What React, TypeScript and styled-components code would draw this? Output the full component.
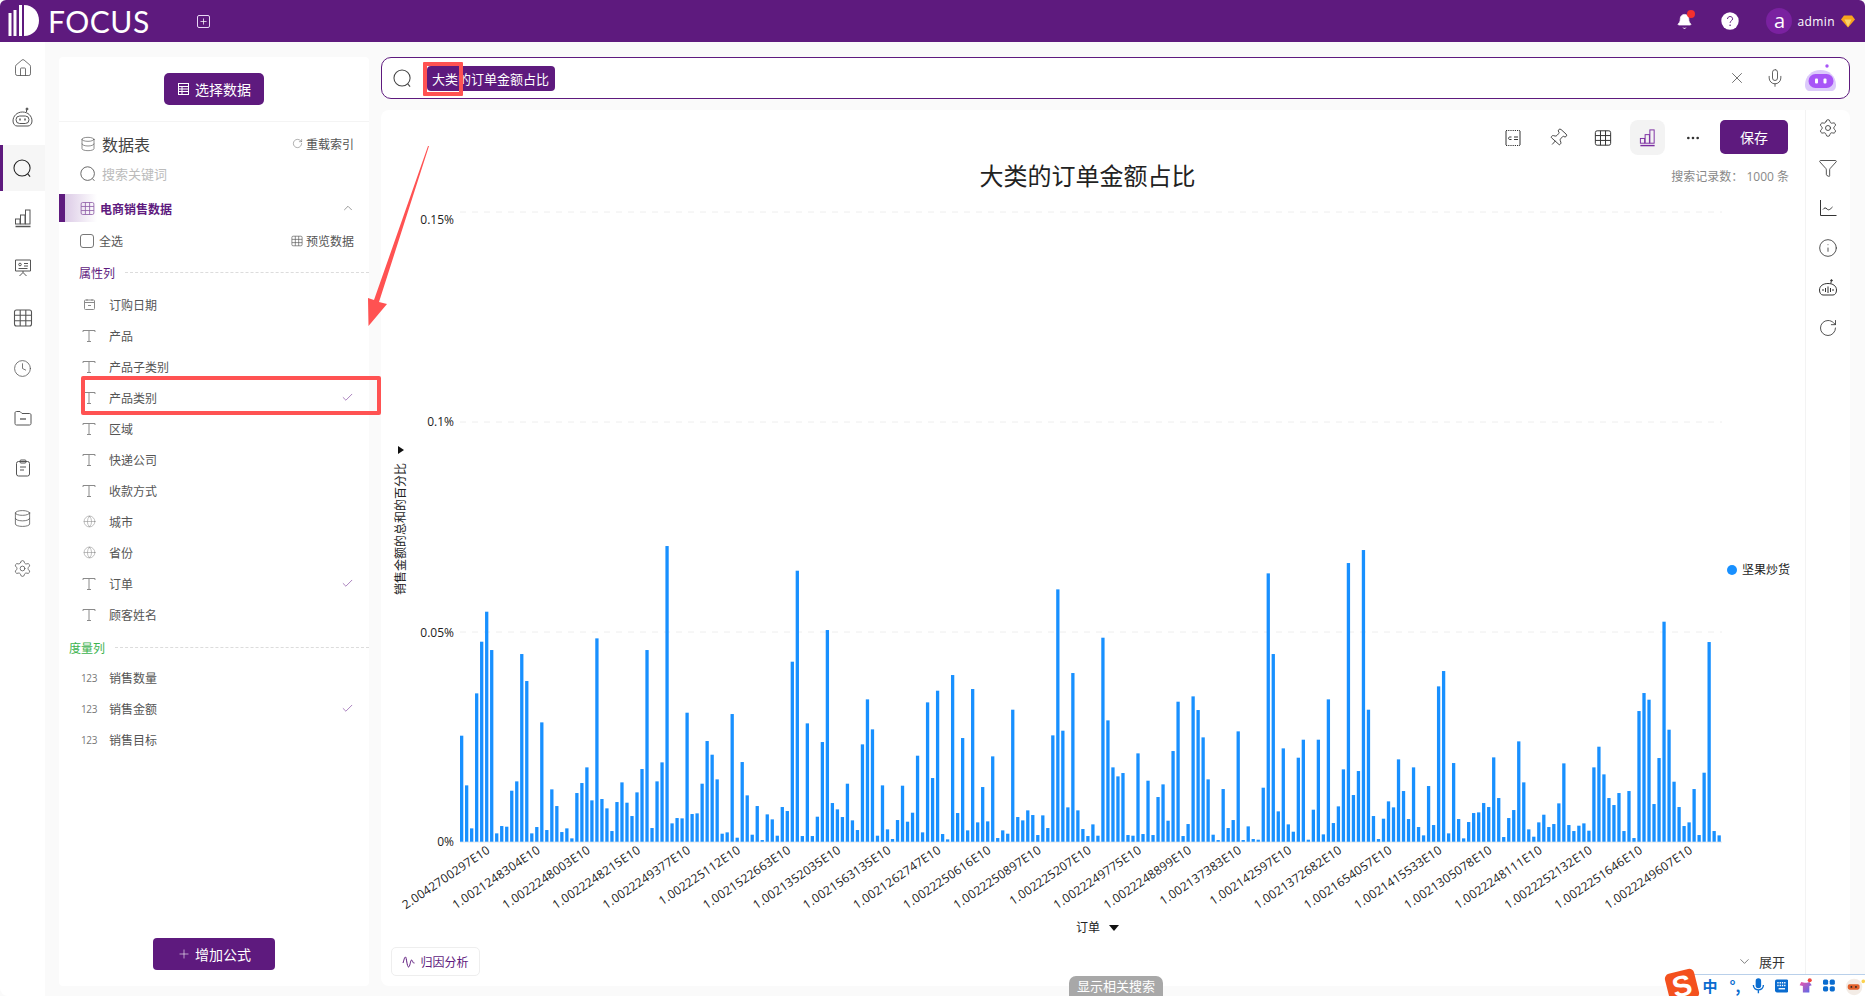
import { ReactNode } from "react";
import styled, { createGlobalStyle } from "styled-components";
import {
  Bell, Check, ChevronDown, ChevronUp, Clock, Database, Ellipsis, Funnel, Globe, House, Info, Mic,
  Pin, Plus, RotateCw, Settings, X,
} from "lucide-react";

const PURPLE = "#5e1a7e";
const RED = "#ff5252";
const CJK = `"Noto Sans CJK SC", "Open Sans", sans-serif`;

const GlobalStyle = createGlobalStyle`
  html, body {
    margin: 0;
    padding: 0;
    height: 100%;
    overflow: hidden;
    background: #fafafa;
    font-family: "Open Sans", "Noto Sans CJK SC", sans-serif;
  }
  #root { height: 100%; }
`;

const Page = styled.div`
  position: relative;
  width: 1865px;
  height: 996px;
  display: flex;
  flex-direction: column;
  overflow: hidden;
`;

/* header */
const TopBar = styled.header`
  height: 42px;
  flex: none;
  background: ${PURPLE};
  border-radius: 6px 6px 0 0;
  display: flex;
  align-items: center;
  color: #fff;
  padding: 0 10px 0 8px;
`;

const LogoText = styled.span`
  margin-left: 8px;
  width: 101px;
  font-family: "Lato", sans-serif;
  font-weight: 400;
  font-size: 30px;
  line-height: 42px;
  letter-spacing: 0.5px;
  color: #fff;
`;

const AddTab = styled.span`
  margin-left: 48px;
  width: 11px;
  height: 11px;
  border: 1px solid #e9d8f5;
  border-radius: 2px;
  display: flex;
  align-items: center;
  justify-content: center;
`;

const TopRight = styled.div`
  margin-left: auto;
  display: flex;
  align-items: center;
`;

const BellWrap = styled.span`
  position: relative;
  display: flex;
  margin-right: 28px;
`;

const BellDot = styled.span`
  position: absolute;
  top: -3px;
  right: -2px;
  width: 8px;
  height: 8px;
  background: #f5302e;
  border-radius: 50%;
`;

const Avatar = styled.span`
  margin-left: 27px;
  width: 26px;
  height: 26px;
  border-radius: 50%;
  background: #7a21a0;
  display: flex;
  align-items: center;
  justify-content: center;
  font-size: 20px;
  line-height: 24px;
`;

const UserName = styled.span`
  margin: 0 6px 0 5px;
  font-size: 12px;
  letter-spacing: 0.4px;
`;

/* body */
const Body = styled.div`
  flex: 1;
  display: flex;
  min-height: 0;
`;

const Nav = styled.nav`
  width: 45px;
  flex: none;
  background: #fff;
  border-bottom-left-radius: 8px;
  display: flex;
  flex-direction: column;
  padding-top: 1px;
`;

const NavItem = styled.div<{ $active?: boolean }>`
  height: ${(p) => (p.$active ? 46 : 50)}px;
  margin: ${(p) => (p.$active ? "2px 0" : "0")};
  display: flex;
  align-items: center;
  justify-content: center;
  color: ${(p) => (p.$active ? "#222" : "#555")};
  background: ${(p) => (p.$active ? "#f6f6f6" : "transparent")};
  box-shadow: ${(p) => (p.$active ? `inset 3px 0 0 ${PURPLE}` : "none")};
`;

const Content = styled.div`
  flex: 1;
  display: flex;
  gap: 12px;
  padding: 15px 15px 10px 14px;
  min-width: 0;
`;

/* left data panel */
const DataPanel = styled.aside`
  position: relative;
  width: 310px;
  flex: none;
  background: #fff;
  border-radius: 4px;
  display: flex;
  flex-direction: column;
  color: #555;
`;

const ChooseWrap = styled.div`
  height: 65px;
  flex: none;
  display: flex;
  align-items: center;
  justify-content: center;
  border-bottom: 1px solid #f4f4f4;
  box-sizing: border-box;
`;

const PurpleButton = styled.button<{ $w: number; $h: number; $r: number }>`
  width: ${(p) => p.$w}px;
  height: ${(p) => p.$h}px;
  border: 0;
  border-radius: ${(p) => p.$r}px;
  background: ${PURPLE};
  color: #fff;
  font-family: ${CJK};
  font-size: 14px;
  display: flex;
  align-items: center;
  justify-content: center;
  gap: 4px;
  padding: 0;
`;

const PanelRow = styled.div<{ $h: number }>`
  height: ${(p) => p.$h}px;
  flex: none;
  display: flex;
  align-items: center;
  justify-content: space-between;
  padding: 0 15px 0 21px;
  font-family: ${CJK};
`;

const Inline = styled.span<{ $gap: number }>`
  display: flex;
  align-items: center;
  gap: ${(p) => p.$gap}px;
`;

const BigLabel = styled.span`
  font-size: 16px;
  color: #444;
`;

const SmallLabel = styled.span`
  font-size: 12px;
  color: #555;
`;

const Placeholder = styled.span`
  font-size: 13px;
  color: #bbb;
`;

const SourceRow = styled.div`
  margin-top: 12px;
  height: 28px;
  flex: none;
  display: flex;
  align-items: center;
  justify-content: space-between;
  padding: 0 14px 0 15px;
  border-left: 6px solid ${PURPLE};
  background: linear-gradient(90deg, #dccbe6 0, #ffffff 32px);
  font-family: ${CJK};
`;

const SourceIcon = styled.span`
  display: flex;
  color: #8f5fa8;
`;

const SourceName = styled.span`
  font-size: 12px;
  font-weight: 700;
  color: ${PURPLE};
`;

const CheckBox = styled.span`
  width: 12px;
  height: 12px;
  border: 1px solid #777;
  border-radius: 3px;
`;

const SectionHead = styled.div<{ $left: number; $color: string; $h: number; $top: number; $bottom: number }>`
  height: ${(p) => p.$h}px;
  box-sizing: border-box;
  padding: ${(p) => p.$top}px 0 ${(p) => p.$bottom}px ${(p) => p.$left}px;
  flex: none;
  display: flex;
  align-items: center;
  gap: 10px;
  font-family: ${CJK};
  font-size: 12px;
  color: ${(p) => p.$color};
  &::after {
    content: "";
    flex: 1;
    border-top: 1px dashed #dcdcdc;
  }
`;

const FieldRow = styled.div`
  position: relative;
  height: 31px;
  flex: none;
  display: flex;
  align-items: center;
  padding: 0 15px 0 20px;
  font-family: ${CJK};
  font-size: 12px;
  color: #555;
`;

const FieldIcon = styled.span`
  width: 20px;
  margin-right: 10px;
  display: flex;
  justify-content: center;
  color: #8a8a8a;
`;

const NumberMark = styled.span`
  font-family: "Open Sans", sans-serif;
  font-size: 10px;
  letter-spacing: -0.4px;
  color: #777;
`;

const FieldCheck = styled.span`
  margin-left: auto;
  display: flex;
  color: #7d3f9c;
`;

const RowHighlight = styled.span`
  position: absolute;
  left: 22px;
  top: -6px;
  width: 300px;
  height: 39px;
  box-sizing: border-box;
  border: 4px solid ${RED};
  border-radius: 2px;
`;

const AddWrap = styled.div`
  margin-top: auto;
  padding-bottom: 16px;
  display: flex;
  justify-content: center;
`;

/* right column */
const MainColumn = styled.main`
  flex: 1;
  min-width: 0;
  display: flex;
  flex-direction: column;
  gap: 11px;
`;

const SearchBar = styled.div`
  height: 42px;
  flex: none;
  box-sizing: border-box;
  background: #fff;
  border: 1.5px solid ${PURPLE};
  border-radius: 10px;
  display: flex;
  align-items: center;
  padding: 0 12px 0 11px;
  color: #444;
`;

const Token = styled.span`
  position: relative;
  margin-left: 15px;
  height: 25px;
  padding: 0 6px 0 5px;
  border-radius: 4px;
  background: ${PURPLE};
  color: #fff;
  font-family: ${CJK};
  font-size: 13px;
  line-height: 25px;
`;

const TokenHighlight = styled.span`
  position: absolute;
  left: -4px;
  top: -4px;
  width: 40px;
  height: 34px;
  box-sizing: border-box;
  border: 4px solid ${RED};
  border-radius: 1px;
`;

const SearchTools = styled.div`
  margin-left: auto;
  display: flex;
  align-items: center;
  gap: 19px;
`;

const ChartPanel = styled.section`
  flex: 1;
  min-height: 0;
  display: flex;
  background: #fff;
  border-radius: 8px;
`;

const ChartMain = styled.div`
  flex: 1;
  min-width: 0;
  display: flex;
  flex-direction: column;
`;

const Toolbar = styled.div`
  height: 45px;
  flex: none;
  box-sizing: border-box;
  padding: 10px 17px 0 0;
  display: flex;
  justify-content: flex-end;
  gap: 10px;
`;

const ToolButton = styled.span<{ $active?: boolean }>`
  width: 35px;
  height: 35px;
  border-radius: 8px;
  background: ${(p) => (p.$active ? "#f3f3f3" : "transparent")};
  display: flex;
  align-items: center;
  justify-content: center;
  color: ${(p) => (p.$active ? "#7a2ca0" : "#333")};
`;

const PinIcon = styled(Pin)`
  transform: rotate(42deg);
`;

const TitleRow = styled.div`
  height: 42px;
  flex: none;
  display: grid;
  grid-template-columns: 1fr auto 1fr;
  align-items: center;
  padding: 0 16px 0 5px;
  font-family: ${CJK};
`;

const ChartTitle = styled.h1`
  grid-column: 2;
  margin: 0;
  padding-bottom: 4px;
  font-size: 24px;
  font-weight: 400;
  color: #222;
`;

const RecordCount = styled.span`
  justify-self: end;
  font-family: "Open Sans", "Noto Sans CJK SC", sans-serif;
  font-size: 12px;
  color: #888;
  white-space: pre;
`;

const ChartSvg = styled.svg`
  display: block;
  width: 1425px;
  height: 743px;
  flex: none;
`;

const ChartFooter = styled.div`
  flex: 1;
  display: flex;
  align-items: flex-start;
  justify-content: space-between;
  padding: 7px 20px 0 10px;
  font-family: ${CJK};
`;

const CauseButton = styled.span`
  height: 29px;
  width: 89px;
  box-sizing: border-box;
  border: 1px solid #eee;
  border-radius: 5px;
  display: flex;
  align-items: center;
  justify-content: center;
  gap: 4px;
  font-size: 12px;
  color: ${PURPLE};
`;

const Expand = styled.span`
  margin-top: 5px;
  display: flex;
  align-items: center;
  gap: 7px;
  font-size: 13px;
  color: #333;
`;

const SideStrip = styled.div`
  width: 44px;
  flex: none;
  border-left: 1px solid #f3f3f3;
  display: flex;
  flex-direction: column;
  align-items: center;
  gap: 20px;
  padding-top: 8px;
  color: #333;
`;

const SideSlot = styled.span`
  height: 20px;
  display: flex;
  align-items: center;
`;

/* overlays */
const ArrowLayer = styled.svg`
  position: absolute;
  left: 360px;
  top: 140px;
  width: 80px;
  height: 200px;
  pointer-events: none;
`;

const RelatedTab = styled.div`
  position: absolute;
  left: 1069px;
  bottom: 0;
  width: 94px;
  height: 20px;
  border-radius: 7px 7px 0 0;
  background: #a8a8a8;
  color: #fff;
  font-family: ${CJK};
  font-size: 13px;
  line-height: 20px;
  text-align: center;
`;

const ImeBar = styled.div`
  position: absolute;
  right: 0;
  bottom: 0;
  width: 185px;
  height: 22px;
  background: #fff;
  border-top: 1px solid #b9d0ea;
  display: flex;
  align-items: center;
  gap: 10px;
  padding-left: 22px;
  box-sizing: border-box;
  color: #0a6ccf;
`;

const ImeLogo = styled.span`
  position: absolute;
  left: -13px;
  top: -4px;
  width: 30px;
  height: 30px;
  border-radius: 5px;
  background: #f4511e;
  transform: rotate(-14deg);
  color: #fff;
  font-family: "Liberation Sans", sans-serif;
  font-size: 29px;
  font-weight: 700;
  line-height: 30px;
  text-align: center;
`;

const ImeChar = styled.span<{ $w: number }>`
  width: ${(p) => p.$w}px;
  font-family: ${CJK};
  font-size: 15px;
  font-weight: 700;
  line-height: 20px;
  text-align: center;
  flex: none;
`;

/* drawn icons */
const Svg = ({ s, children, w }: { s: number; w?: number; children: ReactNode }) => (
  <svg width={w ?? s} height={s} viewBox={`0 0 ${w ?? s} ${s}`} fill="none" stroke="currentColor" strokeWidth={1}>
    {children}
  </svg>
);

const LogoMark = () => (
  <svg width="32" height="32" viewBox="0 0 32 32" fill="#fff">
    <rect x="0.5" y="8" width="3" height="23" />
    <rect x="5.5" y="5" width="3" height="26" />
    <rect x="11" y="0" width="3" height="31" />
    <path d="M16 0c9 0 15 7 15 15.500S25 31 16 31Z" />
  </svg>
);

const SearchMark = ({ s }: { s: number }) => (
  <svg width={s} height={s} viewBox="0 0 20 20" fill="none" stroke="currentColor" strokeWidth={1.100}>
    <circle cx="9.500" cy="9.500" r="8.500" />
    <path d="M15.500 15.700 18 18.500" />
  </svg>
);

const BarsIcon = ({ s }: { s: number }) => (
  <svg width={s} height={s} viewBox="0 0 20 20" fill="none" stroke="currentColor" strokeWidth={1}>
    <path d="M2.500 18.500h15" strokeWidth={1.500} />
    <rect x="2.500" y="11" width="4.500" height="5" />
    <rect x="7.500" y="7" width="4.500" height="9" />
    <rect x="12.500" y="2" width="4.500" height="14" />
  </svg>
);

const GridIcon = ({ s }: { s: number }) => (
  <svg width={s} height={s} viewBox="0 0 20 20" fill="none" stroke="currentColor" strokeWidth={1.100}>
    <rect x="1.500" y="2" width="17" height="16" rx="2" />
    <path d="M7.200 2v16M12.800 2v16M1.500 7.300h17M1.500 12.700h17" />
  </svg>
);

const ListTableIcon = () => (
  <Svg s={14}>
    <rect x="1.500" y="1.500" width="10" height="11" />
    <path d="M1.500 4.500h10M1.500 7h10M1.500 9.500h10M5 4.500v8" />
  </Svg>
);

const DbIcon = ({ s }: { s: number }) => <Database size={s} strokeWidth={1} />;

const ThinT = () => (
  <Svg s={14}>
    <path d="M1 3V1.500h12V3M7 1.500v11M5 12.500h4" />
  </Svg>
);

const DateMark = () => (
  <Svg s={13}>
    <rect x="1.500" y="2" width="10" height="9.500" rx="1" />
    <path d="M1.500 4.500h10M4 1v2M9 1v2M5 7.500h3" />
  </Svg>
);

const NavBot = () => (
  <svg width="23" height="22" viewBox="0 0 23 22" fill="none" stroke="currentColor" strokeWidth={1}>
    <circle cx="16" cy="2" r="1" fill="currentColor" />
    <path d="M15.500 3v2" />
    <path d="M2 14c0-5 4-9 9.500-9S21 9 21 14c0 3-2 5-4 5H6c-2 0-4-2-4-5Z" />
    <rect x="5" y="9" width="13" height="7.500" rx="3.700" />
    <path d="M9 11.500v2M14 11.500v2" strokeWidth={1.500} />
  </svg>
);

const NoticeBoard = () => (
  <svg width="18" height="20" viewBox="0 0 18 20" fill="none" stroke="currentColor" strokeWidth={1}>
    <path d="M1.500 2h15v11h-15Z" />
    <circle cx="6" cy="6.500" r="1.300" />
    <path d="M10 5.500h4M10 8h4M4.500 10.500h9M9 13v1.500M5.500 18 9 14.500l3.500 3.500" />
  </svg>
);

const FolderMark = () => (
  <svg width="18" height="17" viewBox="0 0 18 17" fill="none" stroke="currentColor" strokeWidth={1}>
    <path d="M1 3c0-1 .7-1.500 1.500-1.500h3.500l2 2h7.500c1 0 1.500.7 1.500 1.500v8.500c0 1-.7 1.500-1.500 1.500h-13c-.8 0-1.500-.5-1.500-1.500Z" />
    <path d="M6 9h6" strokeWidth={1.300} />
  </svg>
);

const ClipMark = () => (
  <svg width="16" height="18" viewBox="0 0 16 18" fill="none" stroke="currentColor" strokeWidth={1}>
    <rect x="1.500" y="2.500" width="13" height="14.500" rx="2" />
    <rect x="5" y="1" width="6" height="3" rx="1" />
    <path d="M5 8h6M5 11h4" />
  </svg>
);

const ReceiptMark = () => (
  <svg width="18" height="18" viewBox="0 0 18 18" fill="none" stroke="currentColor" strokeWidth={1}>
    <path d="M2 2v14M16 2v14" />
    <path d="M2 1.500h14M2 16.500h14" strokeDasharray="1.200 1" />
    <path d="M10 8h4M10 10.500h4" />
    <path d="M7.500 8H6C5 8 4.500 8.500 4.500 9.300S5 10.500 6 10.500h1.500" />
  </svg>
);

const TrendMark = () => (
  <svg width="18" height="18" viewBox="0 0 18 18" fill="none" stroke="currentColor" strokeWidth={1}>
    <path d="M1.500 1v15.500h16" />
    <path d="M4 10.500c1.500-2 2.500-2 4-.5s2.500 1 5.500-2" />
  </svg>
);

const VoiceBot = () => (
  <svg width="20" height="18" viewBox="0 0 20 18" fill="none" stroke="currentColor" strokeWidth={1}>
    <circle cx="13.500" cy="1.500" r="0.800" fill="currentColor" />
    <path d="M13 2.500v2" />
    <path d="M1.500 11c0-4 3.500-6.500 8.500-6.500s8.500 2.500 8.500 6.500c0 3-1.500 5-3.500 5H5c-2 0-3.500-2-3.500-5Z" />
    <path d="M5 10v2M7.500 9v4M10 7.500v6.500M12.500 9v4M15 10v2" />
  </svg>
);

const PurpleBot = () => (
  <svg width="33" height="30" viewBox="0 0 33 30" fill="none">
    <circle cx="23" cy="3" r="1.700" fill="#a855f7" />
    <path d="M1 22C1 13 8 7 16.500 7S32 13 32 22c0 4-2 6-5 6H6c-3 0-5-2-5-6Z" fill="#dcc9fb" />
    <rect x="4.500" y="11" width="25" height="14" rx="7" fill="#a855f7" />
    <rect x="11" y="15.500" width="3" height="5" rx="1" fill="#fff" />
    <rect x="19.500" y="15.500" width="3" height="5" rx="1" fill="#fff" />
  </svg>
);

const HelpMark = () => (
  <svg width="18" height="18" viewBox="0 0 18 18">
    <circle cx="9" cy="9" r="8.700" fill="#fff" />
    <path d="M6.500 7c0-1.500 1.200-2.500 2.600-2.500s2.500 1 2.500 2.300c0 2-2.500 2-2.500 4" fill="none" stroke={PURPLE} strokeWidth={1} />
    <circle cx="9.100" cy="13.200" r="0.800" fill={PURPLE} />
  </svg>
);

const GemMark = () => (
  <svg width="14" height="13" viewBox="0 0 14 13">
    <path d="M3 .5h8l3 4-7 8-7-8Z" fill="#f8a41d" />
    <path d="M3.500 4.500h7L7 12Z" fill="#fcd26b" />
  </svg>
);

const WaveMark = () => (
  <svg width="14" height="16" viewBox="0 0 14 16" fill="none" stroke="currentColor" strokeWidth={1}>
    <path d="M1 9c1-3 1.500-6 2.500-6S5 13 6.500 13 8.500 6 9.500 6s1.500 4 3 3" />
  </svg>
);

const ImeMic = () => (
  <svg width="14" height="18" viewBox="0 0 14 18" fill="none">
    <rect x="4" y="0.500" width="6" height="11" rx="3" fill="currentColor" />
    <path d="M1.500 8c0 7 11 7 11 0M7 13v4" stroke="currentColor" strokeWidth={1.500} />
  </svg>
);

const ImeKeyboard = () => (
  <svg width="15" height="14" viewBox="0 0 15 14">
    <rect x="0" y="0" width="15" height="14" rx="2" fill="currentColor" />
    <path d="M2.500 3.500h10M2.500 6.500h10" stroke="#fff" strokeWidth={1.500} strokeDasharray="1.500 1" />
    <path d="M4 10h7" stroke="#fff" strokeWidth={1.500} />
  </svg>
);

const ImeShirt = () => (
  <svg width="16" height="20" viewBox="0 0 18 20">
    <defs>
      <linearGradient id="shirtFill" x1="0" y1="0" x2="1" y2="1">
        <stop offset="0" stopColor="#f355a8" />
        <stop offset="1" stopColor="#4a6cf0" />
      </linearGradient>
    </defs>
    <path d="M4 5 8 6h3l3-1 3 4-3 1v8H6v-8L2 9Z" fill="url(#shirtFill)" />
    <circle cx="14.500" cy="3" r="2.500" fill="#f0483e" />
  </svg>
);

const ImeGrid = () => (
  <svg width="13" height="13" viewBox="0 0 15 15" fill="currentColor">
    <rect x="0" y="0" width="6.500" height="6.500" rx="2" />
    <rect x="8.500" y="0" width="6.500" height="6.500" rx="2" />
    <rect x="0" y="8.500" width="6.500" height="6.500" rx="2" />
    <rect x="8.500" y="8.500" width="6.500" height="6.500" rx="2" />
  </svg>
);

const ImeMascot = () => (
  <svg width="22" height="22" viewBox="0 0 22 22">
    <circle cx="10" cy="12" r="9" fill="#f3ece6" />
    <rect x="3" y="9" width="13" height="6" rx="2" fill="#e2612c" />
    <circle cx="7" cy="12" r="1" fill="#222" />
    <circle cx="12" cy="12" r="1" fill="#222" />
    <circle cx="20" cy="6" r="2" fill="#fbd24e" />
  </svg>
);

/* data */
const tops4 = [617,766,895,490,335,245,360,910,888,890,782,754,372,453,910,891,577,900,778,828,906,895,925,789,759,712,811,325,807,835,903,816,757,818,858,787,717,360,894,754,697,48,880,864,865,548,852,850,761,633,674,748,911,907,552,923,696,796,914,828,930,853,868,917,831,843,395,122,918,580,918,860,636,300,819,838,861,761,871,900,643,508,598,917];
const tops5 = [766,898,927,870,767,875,848,677,907,517,744,482,912,928,435,849,624,901,477,877,771,874,679,924,901,911,539,861,871,841,855,915,856,894,616,178,602,832,429,841,897,918,883,917,323,571,712,739,729,915,917,670,912,752,915,801,763,872,663,515,918,882,499,540,622,748,914,930,777,894,870,604,930,889,927,929,773,130,372,844,655,883,905,683,629,929,839,629,913,508,879,829,718,99,795,723,60,539,858,927];
const tops6 = [866,814,832,688,783,867,712,891,916,768,885,469,423,910,699,867,925,876,849,847,819,831,682,804,921,864,840,634,757,898,920,877,854,891,882,820,700,885,903,887,880,902,712,650,733,804,825,789,903,783,924,543,489,509,822,684,275,599,755,831,888,877,777,915,728,336,903,916];
const barHeights = [...tops4, ...tops5, ...tops6].map((t) => (935 - t) / 3);

const BASE_Y = 841.7;
const FIRST_BAR_X = 461.7;
const BAR_STEP = 5.01;

const yTicks = [
  { label: "0.15%", grid: 212, text: 220 },
  { label: "0.1%", grid: 422, text: 422 },
  { label: "0.05%", grid: 632, text: 633 },
  { label: "0%", grid: 0, text: 842 },
];

const xLabels = [
  "2.0042700297E10", "1.0021248304E10", "1.0022248003E10", "1.0022248215E10", "1.0022249377E10",
  "1.002225112E10", "1.0021522663E10", "1.0021352035E10", "1.0021563135E10", "1.0021262747E10",
  "1.0022250616E10", "1.0022250897E10", "1.002225207E10", "1.0022249775E10", "1.0022248899E10",
  "1.002137383E10", "1.002142597E10", "1.0021372682E10", "1.0021654057E10", "1.0021415533E10",
  "1.0021305078E10", "1.0022248111E10", "1.0022252132E10", "1.0022251646E10", "1.0022249607E10",
];

const attributeFields = [
  { name: "订购日期", kind: "date" },
  { name: "产品", kind: "text" },
  { name: "产品子类别", kind: "text" },
  { name: "产品类别", kind: "text", checked: true, marked: true },
  { name: "区域", kind: "text" },
  { name: "快递公司", kind: "text" },
  { name: "收款方式", kind: "text" },
  { name: "城市", kind: "geo" },
  { name: "省份", kind: "geo" },
  { name: "订单", kind: "text", checked: true },
  { name: "顾客姓名", kind: "text" },
];

const measureFields = [
  { name: "销售数量" },
  { name: "销售金额", checked: true },
  { name: "销售目标" },
];

const fieldIcon = (kind: string) => {
  if (kind === "date") return <DateMark />;
  if (kind === "geo") return <Globe size={13} strokeWidth={1} />;
  return <ThinT />;
};

const Chart = () => (
  <ChartSvg viewBox="381 197 1425 743">
    {yTicks.filter((t) => t.grid).map((t) => (
      <line key={t.label} x1={460} x2={1722} y1={t.grid} y2={t.grid} stroke="#eee" strokeDasharray="6 6" />
    ))}
    <line x1={460} x2={1722} y1={842} y2={842} stroke="#dfe3e8" />
    {barHeights.map((h, i) => (
      <rect key={i} x={FIRST_BAR_X - 1.7 + i * BAR_STEP} y={BASE_Y - h} width={3.3} height={h} fill="#1890ff" />
    ))}
    <g fontFamily={'"Open Sans", sans-serif'} fontSize={12} fill="#222">
      {yTicks.map((t) => (
        <text key={t.label} x={454} y={t.text + 4} textAnchor="end">{t.label}</text>
      ))}
      {xLabels.map((label, i) => {
        const x = 491 + i * 50.1;
        return (
          <text key={label} x={x} y={852} textAnchor="end" letterSpacing={0.25} transform={`rotate(-34 ${x} 852)`}>
            {label}
          </text>
        );
      })}
    </g>
    <g fontFamily={CJK} fontSize={12} fill="#222">
      <text x={405} y={595} transform="rotate(-90 405 595)">销售金额的总和的百分比</text>
      <text x={1076} y={932}>订单</text>
      <text x={1742} y={574}>坚果炒货</text>
    </g>
    <path d="M398 446l6 4-6 4Z" fill="#111" />
    <path d="M1109 925h10l-5 6Z" fill="#111" />
    <circle cx={1732} cy={570} r={5} fill="#1890ff" />
  </ChartSvg>
);

export default function App() {
  return (
    <Page>
      <GlobalStyle />
      <TopBar>
        <LogoMark />
        <LogoText>FOCUS</LogoText>
        <AddTab><Plus size={9} strokeWidth={2} /></AddTab>
        <TopRight>
          <BellWrap>
            <Bell size={17} fill="#fff" strokeWidth={1} />
            <BellDot />
          </BellWrap>
          <HelpMark />
          <Avatar>a</Avatar>
          <UserName>admin</UserName>
          <GemMark />
        </TopRight>
      </TopBar>
      <Body>
        <Nav>
          <NavItem><House size={20} strokeWidth={1} /></NavItem>
          <NavItem><NavBot /></NavItem>
          <NavItem $active><SearchMark s={19} /></NavItem>
          <NavItem><BarsIcon s={20} /></NavItem>
          <NavItem><NoticeBoard /></NavItem>
          <NavItem><GridIcon s={20} /></NavItem>
          <NavItem><Clock size={19} strokeWidth={1} /></NavItem>
          <NavItem><FolderMark /></NavItem>
          <NavItem><ClipMark /></NavItem>
          <NavItem><DbIcon s={19} /></NavItem>
          <NavItem><Settings size={19} strokeWidth={1} /></NavItem>
        </Nav>
        <Content>
          <DataPanel>
            <ChooseWrap>
              <PurpleButton $w={100} $h={32} $r={5}><ListTableIcon />选择数据</PurpleButton>
            </ChooseWrap>
            <PanelRow $h={43}>
              <Inline $gap={6}><DbIcon s={16} /><BigLabel>数据表</BigLabel></Inline>
              <Inline $gap={3}><RotateCw size={11} strokeWidth={1} /><SmallLabel>重载索引</SmallLabel></Inline>
            </PanelRow>
            <PanelRow $h={17}>
              <Inline $gap={6}><SearchMark s={16} /><Placeholder>搜索关键词</Placeholder></Inline>
            </PanelRow>
            <SourceRow>
              <Inline $gap={5}>
                <SourceIcon><GridIcon s={15} /></SourceIcon>
                <SourceName>电商销售数据</SourceName>
              </Inline>
              <ChevronUp size={14} strokeWidth={1} />
            </SourceRow>
            <PanelRow $h={37}>
              <Inline $gap={5}><CheckBox /><SmallLabel>全选</SmallLabel></Inline>
              <Inline $gap={3}><GridIcon s={12} /><SmallLabel>预览数据</SmallLabel></Inline>
            </PanelRow>
            <SectionHead $left={20} $color={PURPLE} $h={30} $top={0} $bottom={3}>属性列</SectionHead>
            {attributeFields.map((f) => (
              <FieldRow key={f.name}>
                <FieldIcon>{fieldIcon(f.kind)}</FieldIcon>
                {f.name}
                {f.checked && <FieldCheck><Check size={13} strokeWidth={1.200} /></FieldCheck>}
                {f.marked && <RowHighlight />}
              </FieldRow>
            ))}
            <SectionHead $left={10} $color="#3cb34f" $h={32} $top={2} $bottom={0}>度量列</SectionHead>
            {measureFields.map((f) => (
              <FieldRow key={f.name}>
                <FieldIcon><NumberMark>123</NumberMark></FieldIcon>
                {f.name}
                {f.checked && <FieldCheck><Check size={13} strokeWidth={1.200} /></FieldCheck>}
              </FieldRow>
            ))}
            <AddWrap>
              <PurpleButton $w={122} $h={32} $r={4}><Plus size={14} strokeWidth={1} />增加公式</PurpleButton>
            </AddWrap>
          </DataPanel>
          <MainColumn>
            <SearchBar>
              <SearchMark s={19} />
              <Token>
                大类的订单金额占比
                <TokenHighlight />
              </Token>
              <SearchTools>
                <X size={18} strokeWidth={1} />
                <Mic size={20} strokeWidth={1} />
                <PurpleBot />
              </SearchTools>
            </SearchBar>
            <ChartPanel>
              <ChartMain>
                <Toolbar>
                  <ToolButton><ReceiptMark /></ToolButton>
                  <ToolButton><PinIcon size={20} strokeWidth={1} /></ToolButton>
                  <ToolButton><GridIcon s={18} /></ToolButton>
                  <ToolButton $active><BarsIcon s={19} /></ToolButton>
                  <ToolButton><Ellipsis size={16} strokeWidth={2} /></ToolButton>
                  <PurpleButton $w={68} $h={34} $r={5}>保存</PurpleButton>
                </Toolbar>
                <TitleRow>
                  <ChartTitle>大类的订单金额占比</ChartTitle>
                  <RecordCount>搜索记录数： 1000 条</RecordCount>
                </TitleRow>
                <Chart />
                <ChartFooter>
                  <CauseButton><WaveMark />归因分析</CauseButton>
                  <Expand><ChevronDown size={15} strokeWidth={1} />展开</Expand>
                </ChartFooter>
              </ChartMain>
              <SideStrip>
                <SideSlot><Settings size={20} strokeWidth={1} /></SideSlot>
                <SideSlot><Funnel size={20} strokeWidth={1} /></SideSlot>
                <SideSlot><TrendMark /></SideSlot>
                <SideSlot><Info size={20} strokeWidth={1} /></SideSlot>
                <SideSlot><VoiceBot /></SideSlot>
                <SideSlot><RotateCw size={20} strokeWidth={1} /></SideSlot>
              </SideStrip>
            </ChartPanel>
          </MainColumn>
        </Content>
      </Body>
      <ArrowLayer viewBox="360 140 80 200">
        <path d="M429 146 379 302l8 2-18.500 22-.500-28 6 2 54-154Z" fill={RED} />
      </ArrowLayer>
      <RelatedTab>显示相关搜索</RelatedTab>
      <ImeBar>
        <ImeLogo>S</ImeLogo>
        <ImeChar $w={16}>中</ImeChar>
        <ImeChar $w={14}>°,</ImeChar>
        <ImeMic />
        <ImeKeyboard />
        <ImeShirt />
        <ImeGrid />
        <ImeMascot />
      </ImeBar>
    </Page>
  );
}
